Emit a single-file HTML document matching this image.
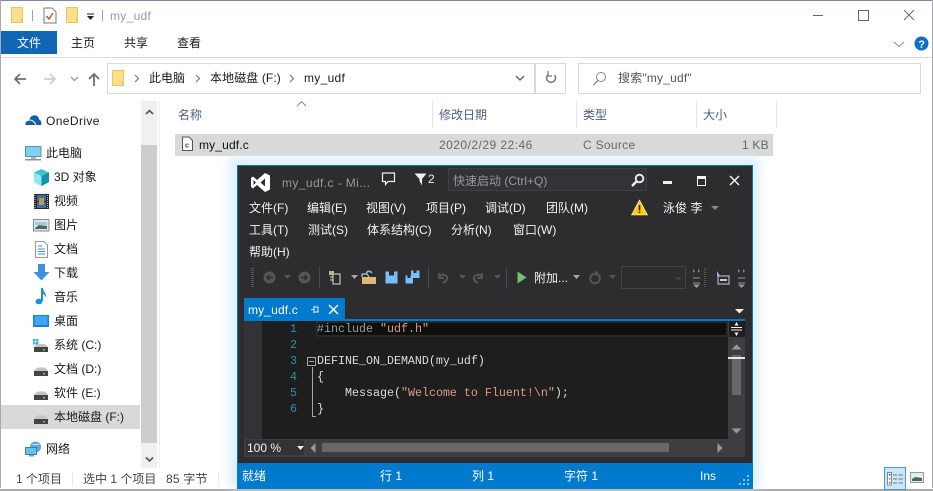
<!DOCTYPE html>
<html><head><meta charset="utf-8"><style>
html,body{margin:0;padding:0;background:#fff;}
#r{position:relative;width:933px;height:491px;overflow:hidden;background:#fff;font:12px "Liberation Sans","Noto Sans CJK SC",sans-serif;color:#1a1a1a;}
#r div,#r span.a,#r svg{position:absolute;}
.t{white-space:pre;line-height:16px;height:16px;}
.g{color:#666;}
.m{color:#f1f1f1;}
.d{color:#f1f1f1;white-space:pre;line-height:16px;height:16px;}
.c{font:11.67px/16px "Liberation Mono",monospace;white-space:pre;color:#dcdcdc;height:16px;}
.n{font:11.67px/16px "Liberation Mono",monospace;color:#2b91af;height:16px;}
</style></head><body><div id="r">
<!-- window frame -->
<div style="left:0;top:0;width:933px;height:1px;background:#7a8aa8"></div>
<div style="left:0;top:0;width:1px;height:491px;background:#a9a9a9"></div>
<div style="left:932px;top:0;width:1px;height:491px;background:#a9a9a9"></div>
<div style="left:0;top:488px;width:933px;height:3px;background:#fff"></div>
<div style="left:0;top:489px;width:933px;height:2px;background:#a9a9a9"></div>

<!-- title bar -->
<svg style="left:10px;top:6px" width="15" height="18"><rect x="1.500" y="1.500" width="11" height="15" fill="#fbe08c" stroke="#e8c568"/><rect x="11" y="12" width="2" height="5" fill="#e8c568"/></svg>
<div style="left:32px;top:10px;width:1px;height:11px;background:#a0a0a0"></div>
<svg style="left:43px;top:7px" width="14" height="17"><path d="M1 1H9L13 5V16H1Z" fill="#fff" stroke="#777"/><path d="M3.500 9L6 12L10 6" fill="none" stroke="#d8552b" stroke-width="1.500"/></svg>
<svg style="left:65px;top:6px" width="15" height="18"><rect x="1.500" y="1.500" width="11" height="15" fill="#fbe08c" stroke="#e8c568"/><rect x="11" y="12" width="2" height="5" fill="#e8c568"/></svg>
<svg style="left:86px;top:13px" width="9" height="8"><path d="M1 1H8" stroke="#222"/><path d="M1 3H8L4.500 7Z" fill="#222"/></svg>
<div style="left:102px;top:10px;width:1px;height:11px;background:#a0a0a0"></div>
<div class="t" style="left:110px;top:8px;color:#9a9a9a;letter-spacing:.3px">my_udf</div>
<div style="left:813px;top:15px;width:10px;height:1px;background:#666"></div>
<div style="left:858px;top:10px;width:9px;height:9px;border:1px solid #666"></div>
<svg style="left:903px;top:9px" width="12" height="12"><path d="M1 1L11 11M11 1L1 11" stroke="#666" fill="none"/></svg>

<!-- ribbon tabs -->
<div style="left:1px;top:31px;width:56px;height:23px;background:#0f66b4"></div>
<div class="t" style="left:17px;top:35px;color:#fff">文件</div>
<div class="t" style="left:71px;top:35px">主页</div>
<div class="t" style="left:124px;top:35px">共享</div>
<div class="t" style="left:177px;top:35px">查看</div>
<svg style="left:893px;top:41px" width="12" height="7"><path d="M1 1L6 5.500L11 1" stroke="#888" fill="none"/></svg>
<svg style="left:914px;top:36px" width="15" height="15"><circle cx="7.500" cy="7.500" r="7" fill="#0f6fc6"/><text x="4.200" y="12" font-size="11" font-weight="bold" fill="#fff" font-family="Liberation Sans">?</text></svg>
<div style="left:1px;top:57px;width:931px;height:1px;background:#dadbdc"></div>

<!-- nav -->
<svg style="left:13px;top:71px" width="14" height="16"><path d="M13 8H2M7 3L2 8L7 13" stroke="#6e6e6e" stroke-width="1.700" fill="none"/></svg>
<svg style="left:43px;top:71px" width="14" height="16"><path d="M1 8H12M7 3L12 8L7 13" stroke="#cdcdcd" stroke-width="1.700" fill="none"/></svg>
<svg style="left:70px;top:76px" width="9" height="6"><path d="M1 1L4.500 4.500L8 1" stroke="#999" stroke-width="1.300" fill="none"/></svg>
<svg style="left:87px;top:71px" width="14" height="16"><path d="M7 15V3M2 8L7 3L12 8" stroke="#6e6e6e" stroke-width="1.800" fill="none"/></svg>
<div style="left:107px;top:63px;width:427px;height:29px;border:1px solid #d9d9d9"></div>
<div style="left:534px;top:63px;width:30px;height:29px;border:1px solid #d9d9d9"></div>
<svg style="left:111px;top:69px" width="15" height="18"><rect x="1.500" y="1.500" width="11" height="15" fill="#fbe08c" stroke="#e8c568"/><rect x="11" y="12" width="2" height="5" fill="#e8c568"/></svg>
<svg style="left:134px;top:74px" width="6" height="9"><path d="M1 1L4.500 4.500L1 8" stroke="#777" stroke-width="1.200" fill="none"/></svg>
<div class="t" style="left:149px;top:70px">此电脑</div>
<svg style="left:195px;top:74px" width="6" height="9"><path d="M1 1L4.500 4.500L1 8" stroke="#777" stroke-width="1.200" fill="none"/></svg>
<div class="t" style="left:210px;top:70px;letter-spacing:.1px">本地磁盘 (F:)</div>
<svg style="left:289px;top:74px" width="6" height="9"><path d="M1 1L4.500 4.500L1 8" stroke="#777" stroke-width="1.200" fill="none"/></svg>
<div class="t" style="left:304px;top:70px;letter-spacing:.3px">my_udf</div>
<svg style="left:515px;top:75px" width="10" height="7"><path d="M1 1L5 5L9 1" stroke="#666" stroke-width="1.500" fill="none"/></svg>
<svg style="left:545px;top:71px" width="12" height="14"><path d="M9.500 4A4.500 4.500 0 1 1 3 3.500" stroke="#777" stroke-width="1.500" fill="none"/><path d="M2 0V5H6" stroke="#777" stroke-width="1.200" fill="none" transform="translate(1 0)"/></svg>
<div style="left:578px;top:63px;width:341px;height:29px;border:1px solid #d9d9d9"></div>
<svg style="left:592px;top:71px" width="15" height="15"><circle cx="9" cy="6" r="4.500" fill="none" stroke="#888"/><path d="M6 9.500L1.500 14" stroke="#b08060" stroke-width="1.300"/></svg>
<div class="t g" style="left:618px;top:70px;color:#555;letter-spacing:.2px">搜索"my_udf"</div>

<!-- column headers -->
<svg style="left:296px;top:100px" width="11" height="7"><path d="M1 6L5.500 1.500L10 6" stroke="#888" fill="none"/></svg>
<div class="t" style="left:178px;top:107px;color:#4c607a">名称</div>
<div style="left:432px;top:101px;width:1px;height:27px;background:#e5e5e5"></div>
<div class="t" style="left:439px;top:107px;color:#4c607a">修改日期</div>
<div style="left:576px;top:101px;width:1px;height:27px;background:#e5e5e5"></div>
<div class="t" style="left:583px;top:107px;color:#4c607a">类型</div>
<div style="left:696px;top:101px;width:1px;height:27px;background:#e5e5e5"></div>
<div class="t" style="left:703px;top:107px;color:#4c607a">大小</div>
<div style="left:776px;top:101px;width:1px;height:27px;background:#e5e5e5"></div>

<!-- selected row -->
<div style="left:175px;top:134px;width:598px;height:22px;background:#d9d9d9"></div>
<svg style="left:181px;top:136px" width="13" height="16"><path d="M1.500 1H8L11.500 4.500V14.500H1.500Z" fill="#fff" stroke="#555"/><text x="4" y="11.500" font-size="7" font-weight="bold" fill="#68217a" font-family="Liberation Sans">c</text></svg>
<div class="t" style="left:199px;top:137px;color:#111;letter-spacing:.15px">my_udf.c</div>
<div class="t g" style="left:439px;top:137px;letter-spacing:.47px">2020/2/29 22:46</div>
<div class="t g" style="left:583px;top:137px;letter-spacing:.3px">C Source</div>
<div class="t g" style="left:742px;top:137px;letter-spacing:.2px">1 KB</div>

<!-- left scrollbar -->
<div style="left:141px;top:101px;width:16px;height:367px;background:#f0f0f0"></div>
<div style="left:141px;top:145px;width:16px;height:298px;background:#cdcdcd"></div>
<svg style="left:145px;top:109px" width="9" height="7"><path d="M1 5L4.500 1.500L8 5" stroke="#555" stroke-width="1.600" fill="none"/></svg>
<svg style="left:145px;top:456px" width="9" height="7"><path d="M1 1.500L4.500 5L8 1.500" stroke="#555" stroke-width="1.600" fill="none"/></svg>
<div style="left:159px;top:101px;width:1px;height:367px;background:#f0f0f0"></div>

<!-- nav tree -->
<svg style="left:25px;top:114px" width="17" height="12"><path d="M0.500 11C0 8.500 2 6.500 4 6.500C5 2 8.500 0.500 11 1.500C13 2.200 14 4 14 5.500C16 6 17 9 16 11Z" fill="#0f5fb0"/><path d="M3 6.500C6 5 9 7 11 11" stroke="#fff" fill="none"/></svg>
<div class="t" style="left:46px;top:113px;letter-spacing:.4px">OneDrive</div>
<svg style="left:25px;top:146px" width="17" height="15"><rect x="0.500" y="0.500" width="15.500" height="10" fill="#7fd0f5" stroke="#6a8aa0"/><rect x="6" y="11" width="5" height="2" fill="#aab4bc"/><rect x="0" y="13" width="16" height="1.500" fill="#8a97a0"/></svg>
<div class="t" style="left:46px;top:145px">此电脑</div>
<svg style="left:33px;top:169px" width="17" height="17"><path d="M8.500 0L16 3.500V13L8.500 17L1 13V3.500Z" fill="#3cc3d6"/><path d="M8.500 7L16 3.500V13L8.500 17Z" fill="#1391a8"/><path d="M8.500 7L1 3.500V13L8.500 17Z" fill="#8fe6ef"/></svg>
<div class="t" style="left:54px;top:169px">3D 对象</div>
<svg style="left:34px;top:194px" width="15" height="15"><rect width="15" height="15" fill="#2a2a2a"/><rect x="3" y="1" width="9" height="6" fill="#3a6ea8"/><rect x="3" y="8" width="9" height="6" fill="#3a6ea8"/><rect x="5" y="4" width="5" height="7" fill="#c9953a"/><path d="M1 1V14" stroke="#bbb" stroke-dasharray="1 1"/><path d="M13.500 1V14" stroke="#bbb" stroke-dasharray="1 1"/></svg>
<div class="t" style="left:54px;top:193px">视频</div>
<svg style="left:33px;top:219px" width="17" height="13"><rect x="0.500" y="0.500" width="15.500" height="11.500" fill="#dde6ee" stroke="#8a8a8a"/><path d="M2 9L6 6L14 7V10H2Z" fill="#44705a"/><rect x="2" y="3" width="12" height="3" fill="#a5c8e6"/></svg>
<div class="t" style="left:54px;top:217px">图片</div>
<svg style="left:35px;top:241px" width="13" height="17"><path d="M0.500 0.500H9L12.500 4V16.500H0.500Z" fill="#fff" stroke="#999"/><path d="M3 5H7M3 8H10M3 10.500H10M3 13H10" stroke="#3b8ed8"/></svg>
<div class="t" style="left:54px;top:241px">文档</div>
<svg style="left:33px;top:264px" width="17" height="17"><path d="M5 0H12V8H16.500L8.500 16.500L0.500 8H5Z" fill="#3d91e0"/></svg>
<div class="t" style="left:54px;top:265px">下载</div>
<svg style="left:35px;top:288px" width="13" height="17"><ellipse cx="4" cy="13.500" rx="3.500" ry="2.800" fill="#1d8fe1"/><path d="M6 0H8C8 4 12 5 11 10C10.500 7 9 6.500 8 6V13H6Z" fill="#1d8fe1"/></svg>
<div class="t" style="left:54px;top:289px">音乐</div>
<svg style="left:33px;top:315px" width="16" height="12"><rect width="16" height="12" fill="#1b7fd6"/><rect x="1.500" y="1" width="13" height="9" fill="#3ea6f2"/></svg>
<div class="t" style="left:54px;top:313px">桌面</div>
<svg style="left:33px;top:339px" width="16" height="13"><rect x="0" y="0" width="2.500" height="2.500" fill="#2fb3ee"/><rect x="3" y="0" width="2.500" height="2.500" fill="#2fb3ee"/><rect x="0" y="3" width="2.500" height="2.500" fill="#2fb3ee"/><rect x="3" y="3" width="2.500" height="2.500" fill="#2fb3ee"/><path d="M1 8L4 5H12L15 8Z" fill="#c4c4c4"/><rect x="1" y="8" width="14" height="5" fill="#444"/><rect x="10" y="10" width="2" height="1.500" fill="#4fd04f"/></svg>
<div class="t" style="left:54px;top:337px">系统 (C:)</div>
<svg style="left:33px;top:363px" width="16" height="14"><path d="M1 8L4 4.500H12L15 8Z" fill="#c4c4c4"/><rect x="1" y="8" width="14" height="5" fill="#444"/><rect x="10" y="10" width="2" height="1.500" fill="#4fd04f"/></svg>
<div class="t" style="left:54px;top:361px">文档 (D:)</div>
<svg style="left:33px;top:387px" width="16" height="14"><path d="M1 8L4 4.500H12L15 8Z" fill="#c4c4c4"/><rect x="1" y="8" width="14" height="5" fill="#444"/><rect x="10" y="10" width="2" height="1.500" fill="#4fd04f"/></svg>
<div class="t" style="left:54px;top:385px">软件 (E:)</div>
<div style="left:1px;top:405px;width:139px;height:24px;background:#d9d9d9"></div>
<svg style="left:33px;top:411px" width="16" height="14"><path d="M1 8L4 4.500H12L15 8Z" fill="#c4c4c4"/><rect x="1" y="8" width="14" height="5" fill="#444"/><rect x="10" y="10" width="2" height="1.500" fill="#4fd04f"/></svg>
<div class="t" style="left:54px;top:409px">本地磁盘 (F:)</div>
<svg style="left:25px;top:441px" width="17" height="16"><circle cx="10.500" cy="6" r="5.500" fill="#5aa7dc"/><path d="M7 3C10 5 12 2 14 4" stroke="#bfe3f7" fill="none"/><rect x="0.500" y="6.500" width="11" height="7" fill="#67c1ee" stroke="#4a7c9c"/><rect x="4" y="14" width="5" height="1.500" fill="#8a97a0"/></svg>
<div class="t" style="left:46px;top:441px">网络</div>

<!-- status bar -->
<div class="t" style="left:16px;top:471px;color:#444">1 个项目</div>
<div style="left:72px;top:472px;width:1px;height:14px;background:#e8e8e8"></div>
<div class="t" style="left:83px;top:471px;color:#444">选中 1 个项目</div>
<div class="t" style="left:166px;top:471px;color:#444;letter-spacing:.2px">85 字节</div>
<div style="left:218px;top:472px;width:1px;height:14px;background:#e8e8e8"></div>
<div style="left:884px;top:467px;width:20px;height:21px;background:#cde6f7;border:1px solid #3d9fd3"></div>
<svg style="left:887px;top:472px" width="18" height="14"><rect x="0.500" y="0.500" width="4" height="12.500" fill="#fff" stroke="#888"/><rect x="2" y="2" width="1.500" height="1.500" fill="#444"/><rect x="2" y="6" width="1.500" height="1.500" fill="#3b8ed8"/><rect x="2" y="10" width="1.500" height="1.500" fill="#c33"/><path d="M6 3H10M11.500 3H16M6 7H10M11.500 7H16M6 11H10M11.500 11H16" stroke="#777"/></svg>
<svg style="left:910px;top:472px" width="14" height="11"><rect x="0.500" y="0.500" width="13" height="10" fill="#e6eef5" stroke="#999"/><path d="M2 7L5 5L12 6V9H2Z" fill="#44705a"/></svg>

<!-- VS window -->
<div style="left:229px;top:157px;width:531px;height:332px;background:#d4ebfb;filter:blur(5px);opacity:.75"></div>
<div style="left:237px;top:165px;width:516px;height:324px;background:#2d2d30;box-sizing:border-box;border:1px solid #007acc"></div>
<svg style="left:250px;top:172px" width="21" height="21"><path d="M15 1L20 3.500V17.500L15 20L7 13L3 16.500L1 15V6L3 4.500L7 8ZM15 6.500L10.500 10.500L15 14.500ZM3.500 8V13L6 10.500Z" fill="#fff" fill-rule="evenodd"/></svg>
<div class="t" style="left:282px;top:175px;color:#999;letter-spacing:.4px">my_udf.c - Mi...</div>
<svg style="left:381px;top:172px" width="15" height="15"><path d="M1.500 1H13.500V9.500H7L4.500 12.500V9.500H1.500Z" fill="none" stroke="#f1f1f1" stroke-width="1.200"/></svg>
<svg style="left:414px;top:173px" width="13" height="13"><path d="M0.500 0.500H12.500L8 6V12.500L5.500 8V6Z" fill="#f1f1f1"/></svg>
<div class="t m" style="left:428px;top:171px">2</div>
<div style="left:448px;top:168px;width:199px;height:23px;box-sizing:border-box;background:#333337;border:1px solid #3f3f46"></div>
<div class="t" style="left:453px;top:173px;color:#999">快速启动 (Ctrl+Q)</div>
<svg style="left:630px;top:173px" width="15" height="15"><circle cx="9.500" cy="5.500" r="3.800" fill="none" stroke="#f1f1f1" stroke-width="1.800"/><path d="M6.500 8.500L2 13" stroke="#f1f1f1" stroke-width="2.400"/></svg>
<div style="left:663px;top:181px;width:9px;height:3px;background:#f1f1f1"></div>
<div style="left:697px;top:176px;width:7px;height:6px;border:1px solid #f1f1f1;border-top-width:3px"></div>
<svg style="left:729px;top:175px" width="11" height="11"><path d="M1 1L10 10M10 1L1 10" stroke="#f1f1f1" stroke-width="1.500" fill="none"/></svg>

<!-- menus -->
<div class="d" style="left:249px;top:200px">文件(F)</div>
<div class="d" style="left:307px;top:200px">编辑(E)</div>
<div class="d" style="left:366px;top:200px">视图(V)</div>
<div class="d" style="left:426px;top:200px">项目(P)</div>
<div class="d" style="left:485px;top:200px">调试(D)</div>
<div class="d" style="left:546px;top:200px">团队(M)</div>
<svg style="left:631px;top:199px" width="17" height="17"><path d="M8.500 1L16.500 16H0.500Z" fill="#fc0" stroke="#fff" stroke-width=".6"/><path d="M7.700 6H9.300V11.500H7.700ZM7.700 12.500H9.300V14H7.700Z" fill="#222"/></svg>
<div class="d" style="left:663px;top:200px">泳俊 李</div>
<svg style="left:711px;top:206px" width="8" height="5"><path d="M0 0H8L4 4Z" fill="#888"/></svg>
<div class="d" style="left:249px;top:222px">工具(T)</div>
<div class="d" style="left:308px;top:222px">测试(S)</div>
<div class="d" style="left:367px;top:222px">体系结构(C)</div>
<div class="d" style="left:451px;top:222px">分析(N)</div>
<div class="d" style="left:513px;top:222px">窗口(W)</div>
<div class="d" style="left:249px;top:244px">帮助(H)</div>

<!-- toolbar -->
<div style="left:251px;top:268px;width:3px;height:20px;background:repeating-linear-gradient(#555 0 1px,transparent 1px 2px)"></div>
<svg style="left:263px;top:271px" width="13" height="13"><circle cx="6.500" cy="6.500" r="6" fill="#555"/><path d="M10 6.500H4M6.500 4L4 6.500L6.500 9" stroke="#2d2d30" stroke-width="1.500" fill="none"/></svg>
<svg style="left:284px;top:275px" width="7" height="4"><path d="M0 0H7L3.500 4Z" fill="#555"/></svg>
<svg style="left:298px;top:271px" width="13" height="13"><circle cx="6.500" cy="6.500" r="6" fill="#555"/><path d="M3 6.500H9M6.500 4L9 6.500L6.500 9" stroke="#2d2d30" stroke-width="1.500" fill="none"/></svg>
<div style="left:319px;top:267px;width:1px;height:21px;background:#4a4a4f"></div>
<svg style="left:328px;top:270px" width="15" height="15"><path d="M5 4H12V14H5Z" fill="none" stroke="#ddd"/><rect x="1" y="1" width="5" height="4" fill="#c9b28a"/><path d="M2 7H5M2 10H5" stroke="#ddd"/></svg>
<svg style="left:351px;top:275px" width="7" height="4"><path d="M0 0H7L3.500 4Z" fill="#aaa"/></svg>
<svg style="left:361px;top:270px" width="16" height="15"><path d="M1 7H15V14H1Z" fill="#dcb67a"/><path d="M1 7V4H6L8 7" fill="none" stroke="#ddd"/><path d="M5 4C6 0.500 9 0.500 11 3" stroke="#75beff" stroke-width="1.500" fill="none"/></svg>
<svg style="left:385px;top:271px" width="13" height="13"><path d="M0.500 0.500H12.500V12.500H0.500Z" fill="#75beff"/><rect x="4" y="0.500" width="5" height="4" fill="#2d2d30"/></svg>
<svg style="left:405px;top:270px" width="15" height="14"><path d="M6 0.500H14.500V8H6Z" fill="#75beff"/><rect x="8.500" y="0.500" width="3" height="2.500" fill="#2d2d30"/><path d="M0.500 5.500H8V13.500H0.500Z" fill="#75beff"/><rect x="2.500" y="5.500" width="3" height="2.500" fill="#2d2d30"/></svg>
<div style="left:428px;top:267px;width:1px;height:21px;background:#4a4a4f"></div>
<svg style="left:436px;top:270px" width="14" height="15"><path d="M3 3V8H8M3 7C6 3 12 5 11 9C10.500 11 9 12 7 13" stroke="#555" stroke-width="2" fill="none"/></svg>
<svg style="left:459px;top:275px" width="7" height="4"><path d="M0 0H7L3.500 4Z" fill="#555"/></svg>
<svg style="left:471px;top:270px" width="14" height="15"><path d="M11 3V8H6M11 7C8 3 2 5 3 9C3.500 11 5 12 7 13" stroke="#555" stroke-width="2" fill="none"/></svg>
<svg style="left:494px;top:275px" width="7" height="4"><path d="M0 0H7L3.500 4Z" fill="#555"/></svg>
<div style="left:506px;top:267px;width:1px;height:21px;background:#4a4a4f"></div>
<svg style="left:517px;top:271px" width="10" height="13"><path d="M0.500 0.500L9.500 6.500L0.500 12.500Z" fill="#70c170"/></svg>
<div class="d" style="left:534px;top:270px">附加...</div>
<svg style="left:573px;top:275px" width="7" height="4"><path d="M0 0H7L3.500 4Z" fill="#aaa"/></svg>
<svg style="left:588px;top:270px" width="14" height="15"><circle cx="7" cy="8.500" r="4.800" fill="none" stroke="#555" stroke-width="2"/><path d="M7 0.500L11 3.500L7 6Z" fill="#555"/></svg>
<svg style="left:609px;top:275px" width="7" height="4"><path d="M0 0H7L3.500 4Z" fill="#555"/></svg>
<div style="left:621px;top:266px;width:65px;height:23px;box-sizing:border-box;border:1px solid #434346"></div>
<svg style="left:675px;top:277px" width="7" height="4"><path d="M0 0H7L3.500 4Z" fill="#434346"/></svg>
<svg style="left:692px;top:268px" width="9" height="20"><path d="M1 1L3 3L1 5ZM6 1L8 3L6 5Z" fill="#888"/><path d="M1 10H8" stroke="#999"/><path d="M1 15H8" stroke="#999"/><path d="M1 16.500H8L4.500 20Z" fill="#999"/></svg>
<div style="left:704px;top:268px;width:2px;height:20px;background:repeating-linear-gradient(#555 0 1px,transparent 1px 2px)"></div>
<svg style="left:716px;top:271px" width="14" height="14"><path d="M1 0L4 5H1Z" fill="#75beff"/><rect x="2" y="5" width="11" height="8" fill="none" stroke="#ccc"/><rect x="4" y="8" width="7" height="2" fill="#ccc"/></svg>
<svg style="left:737px;top:268px" width="9" height="20"><path d="M1 1L3 3L1 5ZM6 1L8 3L6 5Z" fill="#888"/><path d="M1 10H8" stroke="#999"/><path d="M1 15H8" stroke="#999"/><path d="M1 16.500H8L4.500 20Z" fill="#999"/></svg>

<!-- tab -->
<div style="left:244px;top:298px;width:101px;height:21px;background:#007acc"></div>
<div class="t" style="left:248px;top:302px;color:#fff;letter-spacing:.15px">my_udf.c</div>
<svg style="left:310px;top:305px" width="10" height="9"><path d="M1 4.500H4M4 1V8M4 2H8V7H4" stroke="#e8f2fa" fill="none"/></svg>
<svg style="left:328px;top:304px" width="11" height="11"><path d="M1 1L10 10M10 1L1 10" stroke="#fff" stroke-width="1.500" fill="none"/></svg>
<svg style="left:735px;top:309px" width="9" height="5"><path d="M0 0H9L4.500 4.500Z" fill="#f1f1f1"/></svg>
<div style="left:244px;top:319px;width:501px;height:2px;background:#007acc"></div>

<!-- editor -->
<div style="left:244px;top:321px;width:484px;height:118px;background:#1e1e1e"></div>
<div style="left:244px;top:321px;width:18px;height:118px;background:#333337"></div>
<div style="left:317px;top:323px;width:409px;height:12px;background:#0f0f0f"></div>
<div style="left:316px;top:321px;width:412px;height:16px;box-sizing:border-box;border:2px solid #282828;background:transparent"></div>
<div class="n" style="left:290px;top:321px">1</div>
<div class="n" style="left:290px;top:337px">2</div>
<div class="n" style="left:290px;top:353px">3</div>
<div class="n" style="left:290px;top:369px">4</div>
<div class="n" style="left:290px;top:385px">5</div>
<div class="n" style="left:290px;top:401px">6</div>
<div class="c" style="left:317px;top:321px;color:#9b9b9b">#include <span style="color:#d69d85">"udf.h"</span></div>
<div class="c" style="left:317px;top:353px">DEFINE_ON_DEMAND(my_udf)</div>
<div class="c" style="left:317px;top:369px">{</div>
<div class="c" style="left:345px;top:385px">Message(<span style="color:#d69d85">"Welcome to Fluent!\n"</span>);</div>
<div class="c" style="left:317px;top:401px">}</div>
<div style="left:307px;top:357px;width:7px;height:7px;border:1px solid #a5a5a5"></div>
<div style="left:309px;top:361px;width:5px;height:1px;background:#a5a5a5"></div>
<div style="left:312px;top:367px;width:1px;height:49px;background:#a5a5a5"></div>
<div style="left:312px;top:416px;width:4px;height:1px;background:#a5a5a5"></div>

<!-- vertical scroll -->
<div style="left:728px;top:321px;width:17px;height:136px;background:#3e3e42"></div>
<div style="left:729px;top:321px;width:16px;height:16px;background:#1e1e1e"></div>
<svg style="left:730px;top:322px" width="13" height="14"><path d="M1 5.500H12M1 8H12" stroke="#f1f1f1"/><path d="M6.500 0L8.500 3.500H4.500ZM6.500 14L8.500 10.500H4.500Z" fill="#f1f1f1"/></svg>
<svg style="left:731px;top:344px" width="11" height="6"><path d="M0.500 5.500L5.500 0.500L10.500 5.500Z" fill="#999"/></svg>
<div style="left:732px;top:355px;width:9px;height:40px;background:#686868"></div>
<div style="left:728px;top:357px;width:17px;height:2px;background:#e8e8e8"></div>
<svg style="left:731px;top:428px" width="11" height="6"><path d="M0.500 0.500L5.500 5.500L10.500 0.500Z" fill="#999"/></svg>

<!-- horizontal scroll -->
<div style="left:244px;top:439px;width:484px;height:18px;background:#3e3e42"></div>
<div style="left:246px;top:440px;width:58px;height:15px;background:#333337"></div>
<div class="t m" style="left:247px;top:440px;font-size:12px">100 %</div>
<svg style="left:297px;top:446px" width="7" height="4"><path d="M0 0H7L3.500 4Z" fill="#f1f1f1"/></svg>
<svg style="left:310px;top:443px" width="6" height="10"><path d="M5.500 0V10L0.500 5Z" fill="#999"/></svg>
<div style="left:322px;top:443px;width:347px;height:9px;background:#686868"></div>
<svg style="left:717px;top:443px" width="6" height="10"><path d="M0.500 0V10L5.500 5Z" fill="#999"/></svg>

<!-- VS status -->
<div style="left:238px;top:463px;width:514px;height:26px;background:#007acc"></div>
<div class="t" style="left:242px;top:468px;color:#fff">就绪</div>
<div class="t" style="left:380px;top:468px;color:#fff">行 1</div>
<div class="t" style="left:472px;top:468px;color:#fff">列 1</div>
<div class="t" style="left:564px;top:468px;color:#fff">字符 1</div>
<div class="t" style="left:700px;top:468px;color:#fff">Ins</div>
<svg style="left:739px;top:475px" width="11" height="11"><g fill="#8cc4ea"><rect x="8" y="0" width="2" height="2"/><rect x="4" y="4" width="2" height="2"/><rect x="8" y="4" width="2" height="2"/><rect x="0" y="8" width="2" height="2"/><rect x="4" y="8" width="2" height="2"/><rect x="8" y="8" width="2" height="2"/></g></svg>
</div></body></html>
